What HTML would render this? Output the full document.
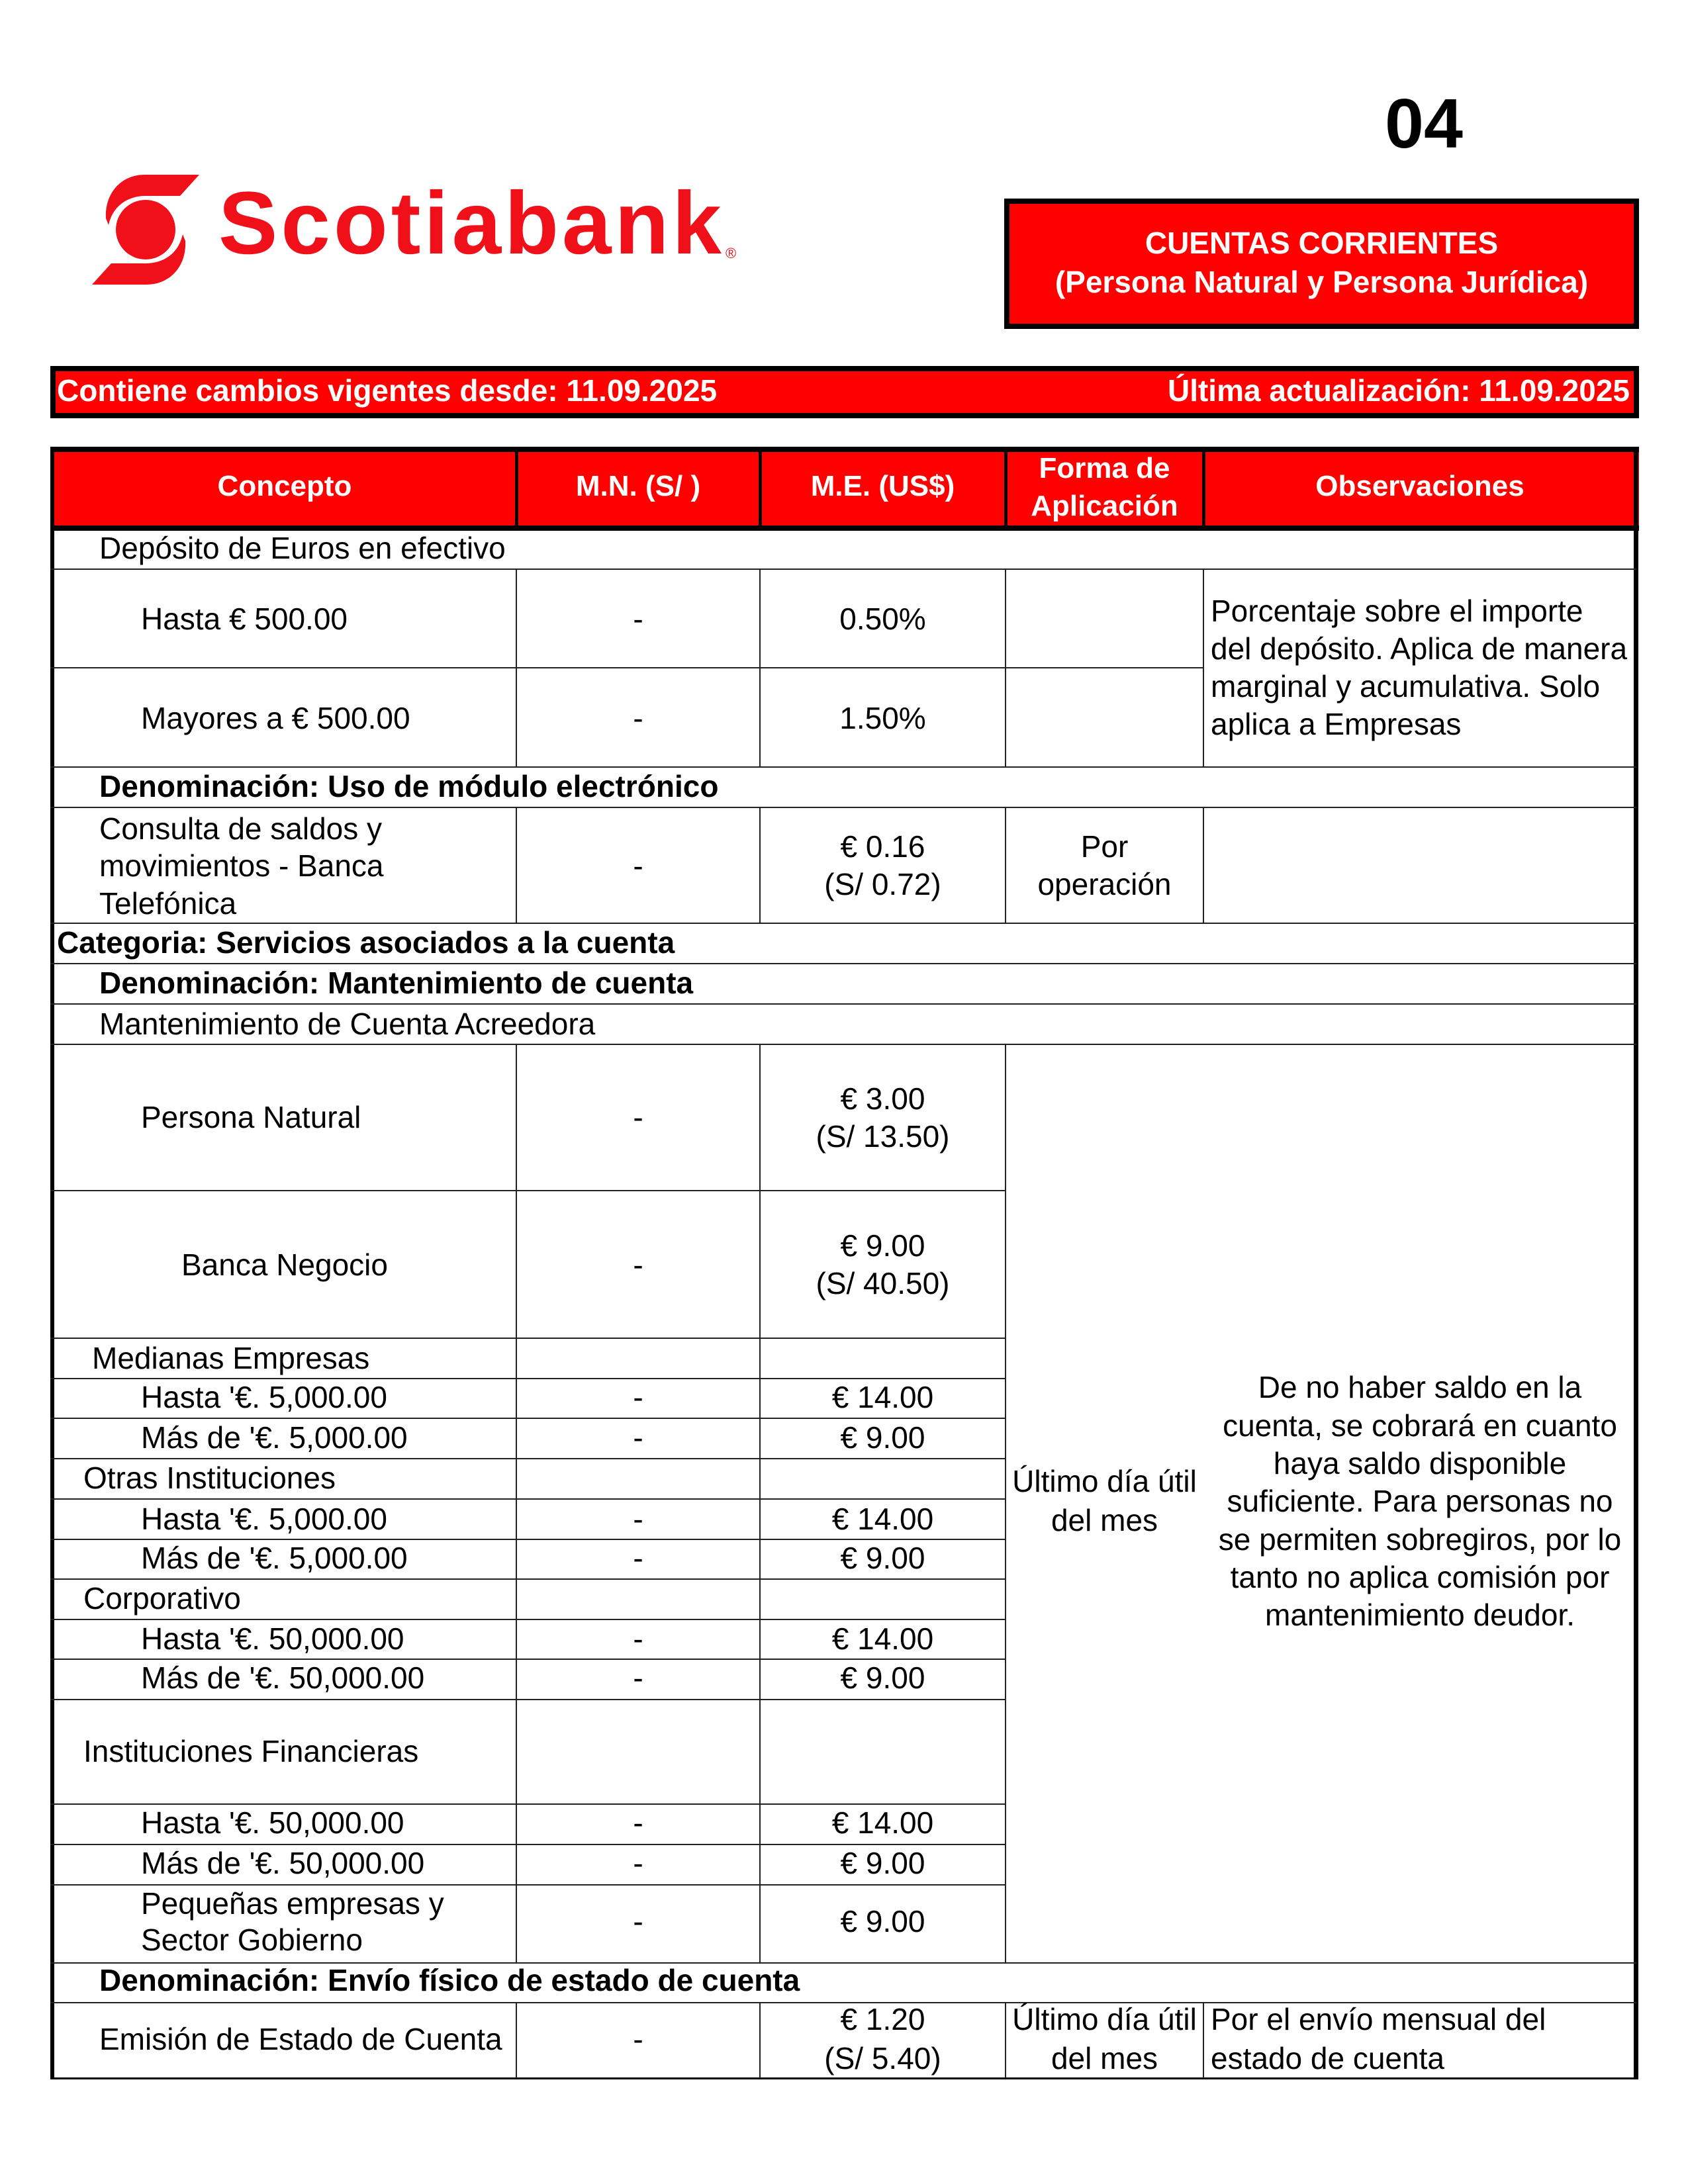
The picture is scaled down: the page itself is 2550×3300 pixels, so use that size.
<!DOCTYPE html>
<html><head><meta charset="utf-8"><style>
html,body{margin:0;padding:0;background:#fff}
body{width:2550px;height:3300px;position:relative;overflow:hidden;font-family:"Liberation Sans",Arial,sans-serif;color:#000}
.a{position:absolute}
.t{position:absolute;font-size:46px;line-height:56px;white-space:nowrap}
.b{font-weight:bold}
.c{text-align:center}
.h{position:absolute;height:2px;background:#222}
.v{position:absolute;width:2px;background:#222}
.hd{position:absolute;color:#fff;font-weight:bold;font-size:44px;line-height:58px;text-align:center;white-space:nowrap}
</style></head><body>

<div class="a b" style="left:2092px;top:122px;font-size:106px;line-height:130px">04</div>

<svg class="a" style="left:0;top:0" width="560" height="480" viewBox="0 0 560 480">
<g fill="#f0101a">
<circle cx="220" cy="347" r="45"/>
<path d="M301 264 L218 264 C185 264 158 290 160 330 L164 340 C170 312 192 296 220 296 L272 296 Z"/>
<path d="M139 430 L222 430 C255 430 282 404 280 364 L276 354 C270 382 248 398 220 398 L168 398 Z"/>
</g>
</svg>
<div class="a b" style="left:330px;top:258px;font-size:134px;line-height:160px;color:#f0101a;letter-spacing:5px">Scotiabank</div>
<div class="a" style="left:1096px;top:370px;font-size:22px;color:#f0101a">®</div>

<div class="a" style="left:1517px;top:300px;width:943px;height:181px;background:#ff0000;border:8px solid #000"></div>
<div class="hd" style="left:1517px;top:338px;width:959px;font-size:46px">CUENTAS CORRIENTES</div>
<div class="hd" style="left:1517px;top:397px;width:959px;font-size:46px">(Persona Natural y Persona Jurídica)</div>

<div class="a" style="left:76px;top:553px;width:2384px;height:63px;background:#ff0000;border:8px solid #000"></div>
<div class="hd" style="left:86px;top:561px;text-align:left;font-size:46px">Contiene cambios vigentes desde: 11.09.2025</div>
<div class="hd" style="right:88px;top:561px;text-align:right;font-size:46px">Última actualización: 11.09.2025</div>

<!-- table header -->
<div class="a" style="left:76px;top:675px;width:2400px;height:8px;background:#000"></div>
<div class="a" style="left:76px;top:683px;width:2400px;height:111px;background:#ff0000"></div>
<div class="a" style="left:76px;top:794px;width:2400px;height:8px;background:#000"></div>
<div class="a" style="left:778px;top:683px;width:5px;height:111px;background:#000"></div>
<div class="a" style="left:1146px;top:683px;width:5px;height:111px;background:#000"></div>
<div class="a" style="left:1517px;top:683px;width:5px;height:111px;background:#000"></div>
<div class="a" style="left:1816px;top:683px;width:5px;height:111px;background:#000"></div>
<div class="hd" style="left:80px;top:706px;width:700px">Concepto</div>
<div class="hd" style="left:780px;top:706px;width:368px">M.N. (S/ )</div>
<div class="hd" style="left:1148px;top:706px;width:371px">M.E. (US$)</div>
<div class="hd" style="left:1519px;top:679px;width:299px">Forma de</div>
<div class="hd" style="left:1519px;top:736px;width:299px">Aplicación</div>
<div class="hd" style="left:1818px;top:706px;width:654px">Observaciones</div>

<!-- outer borders -->
<div class="a" style="left:76px;top:675px;width:6px;height:2467px;background:#000"></div>
<div class="a" style="left:2468px;top:675px;width:7px;height:2467px;background:#000"></div>
<div class="a" style="left:76px;top:3139px;width:2399px;height:3px;background:#000"></div>

<!-- horizontal lines -->
<div class="h" style="left:76px;width:2396px;top:859px"></div>
<div class="h" style="left:76px;width:1742px;top:1008px"></div>
<div class="h" style="left:76px;width:2396px;top:1158px"></div>
<div class="h" style="left:76px;width:2396px;top:1219px"></div>
<div class="h" style="left:76px;width:2396px;top:1394px"></div>
<div class="h" style="left:76px;width:2396px;top:1455px"></div>
<div class="h" style="left:76px;width:2396px;top:1516px"></div>
<div class="h" style="left:76px;width:2396px;top:1577px"></div>
<div class="h" style="left:76px;width:1443px;top:1798px"></div>
<div class="h" style="left:76px;width:1443px;top:2021px"></div>
<div class="h" style="left:76px;width:1443px;top:2082px"></div>
<div class="h" style="left:76px;width:1443px;top:2142px"></div>
<div class="h" style="left:76px;width:1443px;top:2203px"></div>
<div class="h" style="left:76px;width:1443px;top:2264px"></div>
<div class="h" style="left:76px;width:1443px;top:2325px"></div>
<div class="h" style="left:76px;width:1443px;top:2385px"></div>
<div class="h" style="left:76px;width:1443px;top:2446px"></div>
<div class="h" style="left:76px;width:1443px;top:2506px"></div>
<div class="h" style="left:76px;width:1443px;top:2567px"></div>
<div class="h" style="left:76px;width:1443px;top:2725px"></div>
<div class="h" style="left:76px;width:1443px;top:2786px"></div>
<div class="h" style="left:76px;width:1443px;top:2847px"></div>
<div class="h" style="left:76px;width:2396px;top:2965px"></div>
<div class="h" style="left:76px;width:2396px;top:3025px"></div>

<!-- vertical lines -->
<div class="v" style="left:779px;top:860px;height:299px"></div>
<div class="v" style="left:1147px;top:860px;height:299px"></div>
<div class="v" style="left:1518px;top:860px;height:299px"></div>
<div class="v" style="left:1817px;top:860px;height:299px"></div>
<div class="v" style="left:779px;top:1220px;height:175px"></div>
<div class="v" style="left:1147px;top:1220px;height:175px"></div>
<div class="v" style="left:1518px;top:1220px;height:175px"></div>
<div class="v" style="left:1817px;top:1220px;height:175px"></div>
<div class="v" style="left:779px;top:1578px;height:1388px"></div>
<div class="v" style="left:1147px;top:1578px;height:1388px"></div>
<div class="v" style="left:1518px;top:1578px;height:1388px"></div>
<div class="v" style="left:779px;top:3026px;height:114px"></div>
<div class="v" style="left:1147px;top:3026px;height:114px"></div>
<div class="v" style="left:1518px;top:3026px;height:114px"></div>
<div class="v" style="left:1817px;top:3026px;height:114px"></div>

<!-- body text -->
<div class="t" style="left:150px;top:800px">Depósito de Euros en efectivo</div>
<div class="t" style="left:213px;top:907px">Hasta € 500.00</div>
<div class="t c" style="left:780px;width:368px;top:907px">-</div>
<div class="t c" style="left:1148px;width:371px;top:907px">0.50%</div>
<div class="t" style="left:213px;top:1057px">Mayores a € 500.00</div>
<div class="t c" style="left:780px;width:368px;top:1057px">-</div>
<div class="t c" style="left:1148px;width:371px;top:1057px">1.50%</div>
<div class="t" style="left:1829px;top:895px">Porcentaje sobre el importe</div>
<div class="t" style="left:1829px;top:952px">del depósito. Aplica de manera</div>
<div class="t" style="left:1829px;top:1009px">marginal y acumulativa. Solo</div>
<div class="t" style="left:1829px;top:1066px">aplica a Empresas</div>

<div class="t b" style="left:150px;top:1160px">Denominación: Uso de módulo electrónico</div>
<div class="t" style="left:150px;top:1224px">Consulta de saldos y</div>
<div class="t" style="left:150px;top:1280px">movimientos - Banca</div>
<div class="t" style="left:150px;top:1337px">Telefónica</div>
<div class="t c" style="left:780px;width:368px;top:1280px">-</div>
<div class="t c" style="left:1148px;width:371px;top:1251px">€ 0.16</div>
<div class="t c" style="left:1148px;width:371px;top:1308px">(S/ 0.72)</div>
<div class="t c" style="left:1519px;width:299px;top:1251px">Por</div>
<div class="t c" style="left:1519px;width:299px;top:1308px">operación</div>

<div class="t b" style="left:86px;top:1396px">Categoria: Servicios asociados a la cuenta</div>
<div class="t b" style="left:150px;top:1457px">Denominación: Mantenimiento de cuenta</div>
<div class="t" style="left:150px;top:1519px">Mantenimiento de Cuenta Acreedora</div>

<div class="t" style="left:213px;top:1660px">Persona Natural</div>
<div class="t c" style="left:780px;width:368px;top:1660px">-</div>
<div class="t c" style="left:1148px;width:371px;top:1632px">€ 3.00</div>
<div class="t c" style="left:1148px;width:371px;top:1689px">(S/ 13.50)</div>
<div class="t" style="left:274px;top:1883px">Banca Negocio</div>
<div class="t c" style="left:780px;width:368px;top:1883px">-</div>
<div class="t c" style="left:1148px;width:371px;top:1854px">€ 9.00</div>
<div class="t c" style="left:1148px;width:371px;top:1911px">(S/ 40.50)</div>

<div class="t" style="left:139px;top:2024px">Medianas Empresas</div>
<div class="t" style="left:213px;top:2083px">Hasta '€. 5,000.00</div>
<div class="t c" style="left:780px;width:368px;top:2083px">-</div>
<div class="t c" style="left:1148px;width:371px;top:2083px">€ 14.00</div>
<div class="t" style="left:213px;top:2144px">Más de '€. 5,000.00</div>
<div class="t c" style="left:780px;width:368px;top:2144px">-</div>
<div class="t c" style="left:1148px;width:371px;top:2144px">€ 9.00</div>
<div class="t" style="left:126px;top:2205px">Otras Instituciones</div>
<div class="t" style="left:213px;top:2267px">Hasta '€. 5,000.00</div>
<div class="t c" style="left:780px;width:368px;top:2267px">-</div>
<div class="t c" style="left:1148px;width:371px;top:2267px">€ 14.00</div>
<div class="t" style="left:213px;top:2326px">Más de '€. 5,000.00</div>
<div class="t c" style="left:780px;width:368px;top:2326px">-</div>
<div class="t c" style="left:1148px;width:371px;top:2326px">€ 9.00</div>
<div class="t" style="left:126px;top:2387px">Corporativo</div>
<div class="t" style="left:213px;top:2448px">Hasta '€. 50,000.00</div>
<div class="t c" style="left:780px;width:368px;top:2448px">-</div>
<div class="t c" style="left:1148px;width:371px;top:2448px">€ 14.00</div>
<div class="t" style="left:213px;top:2507px">Más de '€. 50,000.00</div>
<div class="t c" style="left:780px;width:368px;top:2507px">-</div>
<div class="t c" style="left:1148px;width:371px;top:2507px">€ 9.00</div>
<div class="t" style="left:126px;top:2618px">Instituciones Financieras</div>
<div class="t" style="left:213px;top:2726px">Hasta '€. 50,000.00</div>
<div class="t c" style="left:780px;width:368px;top:2726px">-</div>
<div class="t c" style="left:1148px;width:371px;top:2726px">€ 14.00</div>
<div class="t" style="left:213px;top:2787px">Más de '€. 50,000.00</div>
<div class="t c" style="left:780px;width:368px;top:2787px">-</div>
<div class="t c" style="left:1148px;width:371px;top:2787px">€ 9.00</div>
<div class="t" style="left:213px;top:2848px">Pequeñas empresas y</div>
<div class="t" style="left:213px;top:2903px">Sector Gobierno</div>
<div class="t c" style="left:780px;width:368px;top:2875px">-</div>
<div class="t c" style="left:1148px;width:371px;top:2875px">€ 9.00</div>

<div class="t c" style="left:1519px;width:299px;top:2210px">Último día útil</div>
<div class="t c" style="left:1519px;width:299px;top:2269px">del mes</div>
<div class="t c" style="left:1820px;width:650px;top:2068px">De no haber saldo en la</div>
<div class="t c" style="left:1820px;width:650px;top:2126px">cuenta, se cobrará en cuanto</div>
<div class="t c" style="left:1820px;width:650px;top:2183px">haya saldo disponible</div>
<div class="t c" style="left:1820px;width:650px;top:2240px">suficiente. Para personas no</div>
<div class="t c" style="left:1820px;width:650px;top:2298px">se permiten sobregiros, por lo</div>
<div class="t c" style="left:1820px;width:650px;top:2355px">tanto no aplica comisión por</div>
<div class="t c" style="left:1820px;width:650px;top:2412px">mantenimiento deudor.</div>

<div class="t b" style="left:150px;top:2964px">Denominación: Envío físico de estado de cuenta</div>
<div class="t" style="left:150px;top:3053px">Emisión de Estado de Cuenta</div>
<div class="t c" style="left:780px;width:368px;top:3053px">-</div>
<div class="t c" style="left:1148px;width:371px;top:3023px">€ 1.20</div>
<div class="t c" style="left:1148px;width:371px;top:3082px">(S/ 5.40)</div>
<div class="t c" style="left:1519px;width:299px;top:3023px">Último día útil</div>
<div class="t c" style="left:1519px;width:299px;top:3082px">del mes</div>
<div class="t" style="left:1829px;top:3023px">Por el envío mensual del</div>
<div class="t" style="left:1829px;top:3082px">estado de cuenta</div>

</body></html>
